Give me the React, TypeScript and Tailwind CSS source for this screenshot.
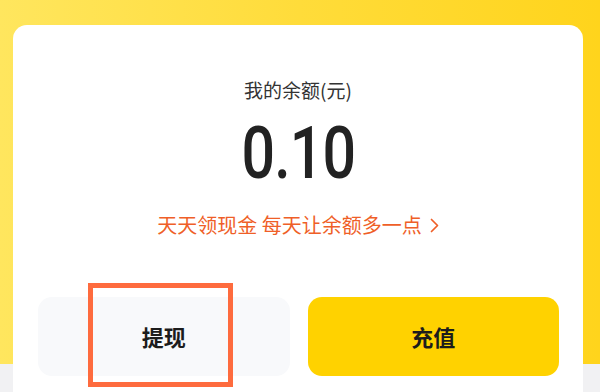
import React from "react";

const CJK = "font-['Noto_Sans_CJK_SC','Noto_Sans',sans-serif]";

function Chevron() {
  return (
    <svg width="9" height="15" viewBox="0 0 9 15" className="ml-[8px] shrink-0">
      <polyline
        points="1.5,1.5 7.5,7.5 1.5,13.5"
        fill="none"
        stroke="#ef5f28"
        strokeWidth="1.7"
        strokeLinecap="round"
        strokeLinejoin="round"
      />
    </svg>
  );
}

export default function App() {
  return (
    <div className="relative h-[392px] w-[600px] overflow-hidden bg-[#f1f1f3] bg-[linear-gradient(to_right,#ffe65e,#ffdc3a_50%,#ffd41c)] bg-[length:100%_364px] bg-no-repeat">
      <div className="ml-[13px] mr-[17px] mt-[25px] h-[400px] rounded-[14px] bg-white">
        <div className="flex flex-col items-center pt-[52px]">
          <p className={`${CJK} text-[19px] leading-[26px] text-[#333333]`}>
            我的余额(元)
          </p>
          <p className="mt-[15px] scale-x-[0.82] font-['Roboto',sans-serif] text-[72px] font-medium leading-none tracking-[-1px] text-[#222222]">
            0.10
          </p>
          <div className="mt-[22px] flex items-center">
            <span className={`${CJK} text-[20px] leading-[26px] text-[#ef5f28]`}>
              天天领现金 每天让余额多一点
            </span>
            <Chevron />
          </div>
        </div>

        <div className="mt-[59px] flex gap-[18px] pl-[25px] pr-[24px]">
          <button
            className={`${CJK} flex h-[79px] flex-1 items-center justify-center rounded-[14px] bg-[#f8f9fb] text-[22px] font-bold text-[#1c1c1c]`}
          >
            提现
          </button>
          <button
            className={`${CJK} flex h-[79px] flex-1 items-center justify-center rounded-[14px] bg-[#ffd200] text-[22px] font-bold text-[#1c1c1c]`}
          >
            充值
          </button>
        </div>
      </div>

      {/* annotation frame over the withdraw button */}
      <div className="pointer-events-none absolute left-[88px] top-[283px] h-[104px] w-[145px] border-[5px] border-[#fe6b3e]" />
    </div>
  );
}
